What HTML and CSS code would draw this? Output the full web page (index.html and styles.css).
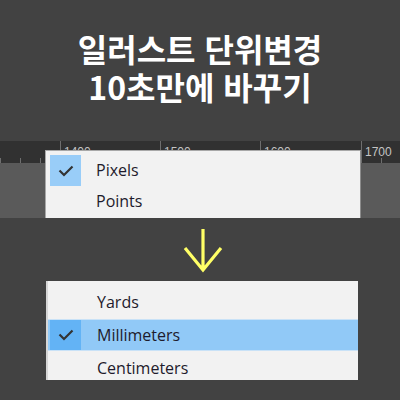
FILE: index.html
```html
<!DOCTYPE html>
<html lang="ko">
<head>
<meta charset="utf-8">
<link rel="stylesheet" href="styles.css">
</head>
<body>
<div class="page">
  <header class="title">
    <div class="line">일러스트 단위변경</div>
    <div class="line">10초만에 바꾸기</div>
  </header>

  <section class="stage">
    <div class="ruler">
      <span class="tick minor" style="left:0px"></span>
      <span class="tick minor" style="left:20px"></span>
      <span class="tick minor" style="left:40px"></span>
      <span class="tick major" style="left:60px"></span>
      <span class="label" style="left:64px">1400</span>
      <span class="tick major" style="left:160px"></span>
      <span class="label" style="left:164px">1500</span>
      <span class="tick major" style="left:260px"></span>
      <span class="label" style="left:264px">1600</span>
      <span class="tick major" style="left:361px"></span>
      <span class="label" style="left:365px">1700</span>
      <span class="tick minor" style="left:381px"></span>
    </div>
    <div class="workspace"></div>
    <div class="menu menu-top">
      <div class="item checked">
        <span class="gutter"><span class="checkbox"><svg viewBox="0 0 16 12" width="16" height="12"><path d="M1.5 5.5 L6 10 L14.5 1.5" fill="none" stroke="#333" stroke-width="2.2"/></svg></span></span>
        <span class="text">Pixels</span>
      </div>
      <div class="item">
        <span class="gutter"></span>
        <span class="text">Points</span>
      </div>
    </div>
  </section>

  <div class="arrow">
    <svg viewBox="0 0 40 46" width="40" height="46"><path d="M20 0 V41 M2 19 L20 41 L38 19" fill="none" stroke="#ffff66" stroke-width="3.2" stroke-linejoin="miter"/></svg>
  </div>

  <div class="menu menu-bottom">
    <div class="item">
      <span class="gutter"></span>
      <span class="text">Yards</span>
    </div>
    <div class="item selected">
      <span class="gutter"><span class="checkbox"><svg viewBox="0 0 16 12" width="16" height="12"><path d="M1.5 5.5 L6 10 L14.5 1.5" fill="none" stroke="#333" stroke-width="2.2"/></svg></span></span>
      <span class="text">Millimeters</span>
    </div>
    <div class="item">
      <span class="gutter"></span>
      <span class="text">Centimeters</span>
    </div>
  </div>
</div>
</body>
</html>
```

FILE: styles.css
```css
html, body {
  margin: 0;
  padding: 0;
  background: #424242;
}

.page {
  width: 400px;
  height: 400px;
  overflow: hidden;
  display: flex;
  flex-direction: column;
}

.title {
  height: 141px;
  box-sizing: border-box;
  padding-top: 29px;
  color: #ffffff;
  font-family: "Noto Sans CJK KR", "Noto Sans", sans-serif;
  font-weight: 700;
  font-size: 32px;
  line-height: 38px;
  text-align: center;
}

.stage {
  position: relative;
  height: 77px;
  overflow: hidden;
}

.ruler {
  position: relative;
  height: 22px;
  background: #313131;
}

.tick {
  position: absolute;
  width: 1px;
  background: #6e6e6e;
}

.tick.minor {
  bottom: 0;
  height: 5px;
}

.tick.major {
  top: 0;
  height: 22px;
}

.label {
  position: absolute;
  top: 5px;
  font-family: "Liberation Sans", sans-serif;
  font-size: 12px;
  line-height: 13px;
  color: #c4c4c4;
}

.workspace {
  height: 55px;
  background: #5a5a5a;
}

.menu {
  background: #f2f2f2;
  font-family: "Open Sans", "Noto Sans", sans-serif;
  font-size: 16px;
  color: #1e1b2c;
  box-sizing: border-box;
}

.menu-top {
  position: absolute;
  left: 45px;
  top: 9px;
  width: 316px;
  height: 80px;
  padding-top: 4px;
  border-left: 1px solid #a8a8a8;
  border-top: 1px solid #a8a8a8;
  border-right: 1px solid #8c8c8c;
}

.item {
  display: flex;
  align-items: center;
  height: 31px;
  padding-left: 4px;
}

.gutter {
  width: 46px;
  height: 100%;
  display: flex;
  align-items: center;
}

.checkbox {
  width: 31px;
  height: 31px;
  background: #99cdf8;
  display: flex;
  align-items: center;
  justify-content: center;
}

.text {
  line-height: 31px;
}

.arrow {
  height: 63px;
  display: flex;
  justify-content: center;
  align-items: flex-start;
  padding-left: 6px;
  box-sizing: border-box;
  padding-top: 11px;
}

.menu-bottom {
  margin-left: 46px;
  width: 312px;
  height: 99px;
  padding-top: 5px;
  border-left: 2px solid #d6d6d6;
  overflow: hidden;
}

.menu-bottom .item {
  height: 32px;
  padding-left: 2px;
}

.menu-bottom .item.selected {
  background: #91c9f7;
  border-top: 1px solid #c9e2f7;
  border-bottom: 1px solid #c9e2f7;
  height: 30px;
  margin-top: 1px;
  margin-bottom: 1px;
}

.menu-bottom .item.selected .checkbox {
  height: 30px;
  background: #63b3f5;
}

.menu-bottom .gutter {
  width: 47px;
}
```
